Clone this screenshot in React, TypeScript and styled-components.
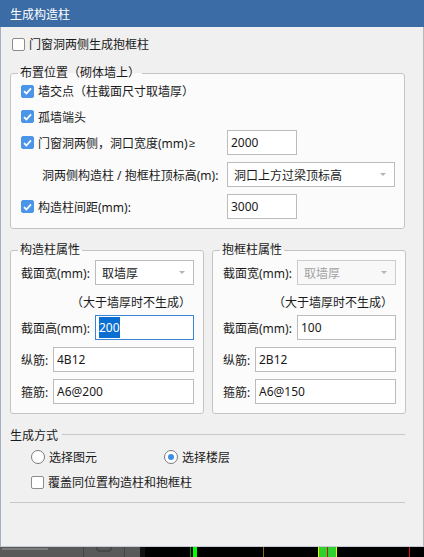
import styled, { createGlobalStyle } from 'styled-components';

const GlobalStyle = createGlobalStyle`
  html, body {
    margin: 0;
    padding: 0;
    background: #000;
  }
  * {
    box-sizing: border-box;
  }
`;

const Window = styled.div`
  width: 424px;
  height: 557px;
  display: flex;
  flex-direction: column;
  font-family: "Noto Sans", "Noto Sans CJK SC", sans-serif;
  font-size: 12px;
  color: #1a1a1a;
  overflow: hidden;
`;

const TitleBar = styled.div`
  height: 27px;
  flex: none;
  background: #3b6ca5;
  color: #fff;
  display: flex;
  align-items: center;
  padding-left: 10px;
  font-size: 12px;
`;

const Body = styled.div`
  height: 520px;
  flex: none;
  background: #f0f0f0;
  border-left: 1px solid #a4b0c2;
  border-right: 1px solid #b8b8b8;
  border-bottom: 1px solid #c6ccd6;
  padding-left: 9px;
  display: flex;
  flex-direction: column;
`;

const Row = styled.div<{ $mt?: number; $h?: number; $pl?: number }>`
  display: flex;
  align-items: center;
  height: ${(p) => p.$h ?? 25}px;
  margin-top: ${(p) => p.$mt ?? 0}px;
  padding-left: ${(p) => p.$pl ?? 0}px;
  white-space: nowrap;
`;

const Box = styled.span<{ $checked?: boolean }>`
  width: 13px;
  height: 13px;
  flex: none;
  border-radius: 2px;
  margin-right: 4px;
  display: inline-flex;
  align-items: center;
  justify-content: center;
  background: ${(p) => (p.$checked ? '#4b95e8' : '#fff')};
  border: 1px solid ${(p) => (p.$checked ? '#4b95e8' : '#8c8c8c')};
`;

const Radio = styled.span<{ $checked?: boolean }>`
  width: 14px;
  height: 14px;
  flex: none;
  border-radius: 50%;
  border: 1px solid #7a7a7a;
  background: #fff;
  margin-right: 4px;
  display: inline-flex;
  align-items: center;
  justify-content: center;
  &::after {
    content: '';
    width: 6px;
    height: 6px;
    border-radius: 50%;
    background: ${(p) => (p.$checked ? '#3d8ee8' : 'transparent')};
  }
`;

const Group = styled.fieldset<{ $w: number; $pb?: number; $mt?: number }>`
  width: ${(p) => p.$w}px;
  margin: ${(p) => p.$mt ?? 0}px 0 0 0;
  padding: 0 9px ${(p) => p.$pb ?? 9}px 10px;
  border: 1px solid #c4c4c4;
  border-radius: 3px;
  background: #fbfbfb;
  min-width: 0;
`;

const Legend = styled.legend`
  margin-left: -3px;
  padding: 0 2px;
  line-height: 16px;
  height: 16px;
`;

const Field = styled.div<{ $w: number; $focus?: boolean; $disabled?: boolean; $ml?: number }>`
  width: ${(p) => p.$w}px;
  height: 25px;
  flex: none;
  margin-left: ${(p) => (p.$ml === undefined ? 'auto' : `${p.$ml}px`)};
  background: ${(p) => (p.$disabled ? '#f8f8f8' : '#fff')};
  border: 1px solid ${(p) => (p.$focus ? '#3a84d6' : p.$disabled ? '#cccccc' : '#bcbcbc')};
  color: ${(p) => (p.$disabled ? '#a3a3a3' : '#1a1a1a')};
  display: flex;
  align-items: center;
  padding-left: 3px;
  padding-right: 8px;
`;

const Selected = styled.span`
  background: #0a6fd0;
  color: #fff;
  padding: 2px 0;
`;

const Caret = styled.span`
  margin-left: auto;
  width: 0;
  height: 0;
  border-left: 3px solid transparent;
  border-right: 3px solid transparent;
  border-top: 3px solid #b4b4b4;
`;

const Note = styled.div`
  height: 18px;
  margin-top: 8px;
  display: flex;
  align-items: center;
  justify-content: flex-end;
  padding-right: 3px;
`;

const Pair = styled.div`
  display: flex;
  gap: 8px;
  margin-top: 13px;
`;

const Section = styled.div`
  display: flex;
  align-items: center;
  gap: 4px;
  height: 18px;
  margin-top: 12px;
  &::after {
    content: '';
    flex: 1;
    height: 1px;
    background: #c8c8c8;
    margin-right: 18px;
    margin-top: -2px;
  }
`;

const Option = styled.div<{ $w?: number; $pl?: number }>`
  display: flex;
  align-items: center;
  width: ${(p) => p.$w ?? 'auto'}px;
  padding-left: ${(p) => p.$pl ?? 0}px;
  flex: none;
`;

const Symbol = styled.span`
  font-family: "Liberation Sans", sans-serif;
  font-size: 11px;
  margin-left: 1px;
`;

const Divider = styled.div`
  height: 1px;
  width: 395px;
  background: #c8c8c8;
  margin-top: 11px;
`;

const Strip = styled.div`
  height: 10px;
  flex: none;
  display: flex;
`;

const Check = () => (
  <svg width="9" height="8" viewBox="0 0 9 8">
    <path d="M1 4.2 L3.4 6.5 L8 1.3" fill="none" stroke="#fff" strokeWidth="1.8" />
  </svg>
);

type CProps = { checked?: boolean; label: string; children?: React.ReactNode };
const CheckItem = ({ checked, label, children }: CProps) => (
  <>
    <Box $checked={checked}>{checked && <Check />}</Box>
    <span>{label}</span>
    {children}
  </>
);

type PropsPanel = {
  title: string;
  width: string;
  widthDisabled?: boolean;
  height: string;
  focusHeight?: boolean;
  bar: string;
  tie: string;
};

const PropPanel = ({ title, width, widthDisabled, height, focusHeight, bar, tie }: PropsPanel) => (
  <Group $w={194}>
    <Legend>{title}</Legend>
    <Row $mt={2}>
      <span>截面宽(mm):</span>
      <Field $w={99} $disabled={widthDisabled}>
        <span style={{ paddingLeft: 3 }}>{width}</span>
        <Caret />
      </Field>
    </Row>
    <Note>（大于墙厚时不生成）</Note>
    <Row $mt={4}>
      <span>截面高(mm):</span>
      <Field $w={99} $focus={focusHeight}>
        {focusHeight ? <Selected>{height}</Selected> : height}
      </Field>
    </Row>
    <Row $mt={7}>
      <span>纵筋:</span>
      <Field $w={141}>{bar}</Field>
    </Row>
    <Row $mt={7}>
      <span>箍筋:</span>
      <Field $w={141}>{tie}</Field>
    </Row>
  </Group>
);

const BottomStrip = () => (
  <Strip>
    <svg width="424" height="10" viewBox="0 0 424 10">
      <rect x="0" y="0" width="145" height="10" fill="#595959" />
      <rect x="2" y="1" width="46" height="2" fill="#8a8a8a" opacity="0.7" />
      <path d="M97 0 v2 q0 2 2 2 h10 q2 0 2 -2 v-2" fill="none" stroke="#3a3a3a" />
      <rect x="83" y="0" width="1" height="10" fill="#444" />
      <rect x="124" y="0" width="1" height="10" fill="#444" />
      <rect x="140" y="0" width="5" height="10" fill="#111" />
      <rect x="145" y="0" width="279" height="10" fill="#000" />
      <rect x="190" y="0" width="1" height="10" fill="#0a8a0a" />
      <rect x="193" y="0" width="4" height="10" fill="#00ff00" />
      <rect x="263" y="0" width="1" height="10" fill="#8a6a1a" />
      <rect x="318" y="0" width="19" height="10" fill="#2fd12f" />
      <rect x="318" y="0" width="1" height="10" fill="#f5f500" />
      <rect x="336" y="0" width="1" height="10" fill="#f5f500" />
      <rect x="327" y="0" width="1" height="10" fill="#d01010" />
      <rect x="409" y="0" width="1" height="10" fill="#e01010" />
    </svg>
  </Strip>
);

const App = () => {
  return (
    <Window>
      <GlobalStyle />
      <TitleBar>生成构造柱</TitleBar>
      <Body>
        <Row $mt={8} $h={18} $pl={2}>
          <CheckItem label="门窗洞两侧生成抱框柱" />
        </Row>
        <Group $w={395} $pb={9} $mt={12}>
          <Legend>布置位置（砌体墙上）</Legend>
          <Row $h={18} $mt={1}>
            <CheckItem checked label="墙交点（柱截面尺寸取墙厚）" />
          </Row>
          <Row $mt={4}>
            <CheckItem checked label="孤墙端头" />
          </Row>
          <Row $mt={1}>
            <Option $w={206}>
              <CheckItem checked label="门窗洞两侧，洞口宽度(mm)">
                <Symbol>≥</Symbol>
              </CheckItem>
            </Option>
            <Field $w={70} $ml={0}>2000</Field>
          </Row>
          <Row $mt={7}>
            <Option $w={206} $pl={21}>
              <span>洞两侧构造柱 / 抱框柱顶标高(m):</span>
            </Option>
            <Field $w={168} $ml={0}>
              <span style={{ paddingLeft: 3 }}>洞口上方过梁顶标高</span>
              <Caret />
            </Field>
          </Row>
          <Row $mt={7}>
            <Option $w={206}>
              <CheckItem checked label="构造柱间距(mm):" />
            </Option>
            <Field $w={70} $ml={0}>3000</Field>
          </Row>
        </Group>
        <Pair>
          <PropPanel title="构造柱属性" width="取墙厚" height="200" focusHeight bar="4B12" tie="A6@200" />
          <PropPanel title="抱框柱属性" width="取墙厚" widthDisabled height="100" bar="2B12" tie="A6@150" />
        </Pair>
        <Section>生成方式</Section>
        <Row $mt={4} $h={18} $pl={21}>
          <Option $w={133}>
            <Radio />
            <span>选择图元</span>
          </Option>
          <Option>
            <Radio $checked />
            <span>选择楼层</span>
          </Option>
        </Row>
        <Row $mt={7} $h={18} $pl={21}>
          <CheckItem label="覆盖同位置构造柱和抱框柱" />
        </Row>
        <Divider />
      </Body>
      <BottomStrip />
    </Window>
  );
};

export default App;
